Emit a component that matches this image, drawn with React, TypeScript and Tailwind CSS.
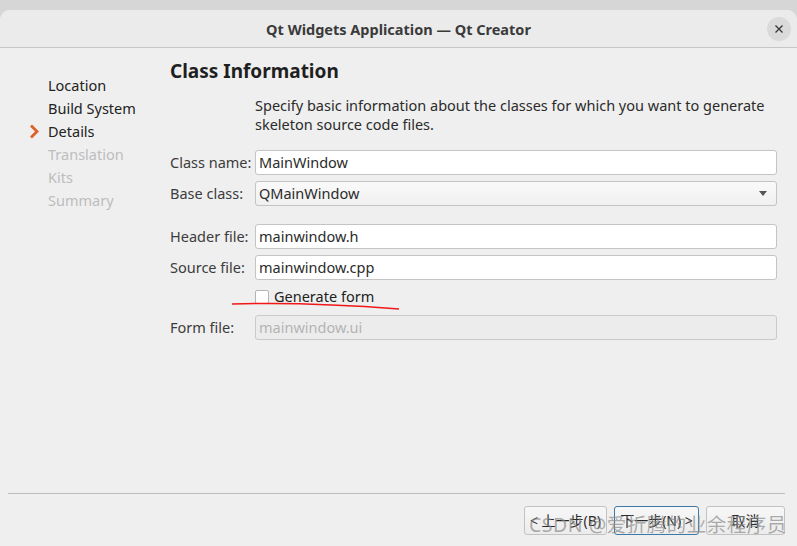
const font = { fontFamily: '"Noto Sans", "Noto Sans CJK SC", sans-serif' };

function Field({ label, value, disabled }: { label: string; value: string; disabled?: boolean }) {
  return (
    <div className="flex items-center h-[25px]">
      <div className="w-[85px] shrink-0 text-[14.5px] text-[#3c3c3c]">{label}</div>
      <div
        className={`flex-1 h-[25px] rounded-[3px] border flex items-center px-[3px] text-[14.5px] ${
          disabled ? "bg-[#ececec] border-[#c9c9c9] text-[#b4b4b4]" : "bg-white border-[#c4c4c4] text-[#2b2b2b]"
        }`}
      >
        {value}
      </div>
    </div>
  );
}

export default function App() {
  const steps = [
    { name: "Location", state: "done" },
    { name: "Build System", state: "done" },
    { name: "Details", state: "current" },
    { name: "Translation", state: "todo" },
    { name: "Kits", state: "todo" },
    { name: "Summary", state: "todo" },
  ];

  return (
    <div className="w-[797px] h-[546px] overflow-hidden bg-gradient-to-b from-[#d6d6d6] to-[#e9e9e9] pt-[10px]" style={font}>
      <div className="h-[536px] bg-[#efefef] rounded-t-[10px] flex flex-col relative overflow-hidden">
        {/* title bar */}
        <div className="h-[38px] shrink-0 bg-[#ebebeb] border-b border-[#c6c6c6] flex items-center justify-center relative">
          <span className="text-[14.5px] font-bold text-[#3a3a3a] mt-[2px]">Qt Widgets Application — Qt Creator</span>
          <div className="absolute right-[6px] top-[7px] w-[24px] h-[24px] rounded-full bg-[#dadada] flex items-center justify-center">
            <svg width="10" height="10" viewBox="0 0 10 10">
              <path d="M1.5 1.5 L8.5 8.5 M8.5 1.5 L1.5 8.5" stroke="#3a3a3a" strokeWidth="1.4" />
            </svg>
          </div>
        </div>

        <div className="flex flex-1">
          {/* nav */}
          <div className="w-[170px] shrink-0 pt-[26px]">
            {steps.map((s) => (
              <div key={s.name} className="h-[23px] flex items-center">
                <div className="w-[48px] flex justify-end pr-[8px]">
                  {s.state === "current" && (
                    <svg width="11" height="15" viewBox="0 0 11 15">
                      <path d="M2 1.5 L8 7.5 L2 13.5" fill="none" stroke="#e0602a" strokeWidth="2.8" strokeLinejoin="miter" />
                    </svg>
                  )}
                </div>
                <span className={`text-[14.5px] ${s.state === "todo" ? "text-[#bdbdbd]" : "text-[#222]"}`}>{s.name}</span>
              </div>
            ))}
          </div>

          {/* content */}
          <div className="flex-1 pr-[20px] pt-[10px]">
            <h1 className="text-[19px] font-bold text-[#1f1f1f] leading-[26px]">Class Information</h1>
            <p className="ml-[85px] mt-[12px] text-[14.5px] leading-[19px] text-[#2b2b2b]">
              Specify basic information about the classes for which you want to generate skeleton source code files.
            </p>
            <div className="mt-[16px] flex flex-col gap-[6px]">
              <Field label="Class name:" value="MainWindow" />
              <div className="flex items-center h-[25px]">
                <div className="w-[85px] shrink-0 text-[14.5px] text-[#3c3c3c]">Base class:</div>
                <div className="flex-1 h-[25px] rounded-[3px] border border-[#c4c4c4] bg-gradient-to-b from-[#fafafa] to-[#f0f0f0] flex items-center px-[3px] text-[14.5px] text-[#2b2b2b]">
                  <span className="flex-1">QMainWindow</span>
                  <svg width="8" height="5" viewBox="0 0 8 5" className="mr-[6px]">
                    <path d="M0 0 H8 L4 5 Z" fill="#555" />
                  </svg>
                </div>
              </div>
            </div>
            <div className="mt-[18px] flex flex-col gap-[6px]">
              <Field label="Header file:" value="mainwindow.h" />
              <Field label="Source file:" value="mainwindow.cpp" />
            </div>
            <div className="relative ml-[85px] mt-[7px] h-[20px] flex items-center gap-[5px]">
              <div className="w-[14px] h-[14px] bg-white border border-[#b5b5b5] rounded-[2px]" />
              <span className="text-[14.5px] text-[#222]">Generate form</span>
              <svg className="absolute left-[-23px] top-[14px]" width="170" height="10" viewBox="0 0 170 10">
                <path d="M0 3 C 50 1.5, 110 3.5, 167 8" fill="none" stroke="#f01818" strokeWidth="1.6" />
              </svg>
            </div>
            <div className="mt-[8px]">
              <Field label="Form file:" value="mainwindow.ui" disabled />
            </div>
          </div>
        </div>

        {/* footer */}
        <div className="ml-[8px] mr-[12px] border-t border-[#bdbdbd]" />
        <div className="h-[52px] shrink-0 flex items-start justify-end gap-[7px] pr-[12px] pt-[12px] relative">
          <button className="w-[83px] h-[29px] rounded-[3px] border border-[#c2c2c2] bg-gradient-to-b from-[#f7f7f7] to-[#ececec] text-[14px] text-[#2a2a2a]">
            &lt; 上一步(B)
          </button>
          <button className="w-[85px] h-[29px] rounded-[3px] border border-[#3d7aa8] bg-gradient-to-b from-[#f7f7f7] to-[#ececec] text-[14px] text-[#2a2a2a]">
            下一步(N) &gt;
          </button>
          <button className="w-[79px] h-[29px] rounded-[3px] border border-[#c2c2c2] bg-gradient-to-b from-[#f7f7f7] to-[#ececec] text-[14px] text-[#2a2a2a]">
            取消
          </button>
          <span className="absolute left-[529px] top-[16px] text-[19.5px] text-[#8a8a8a]/70 whitespace-nowrap pointer-events-none tracking-[0.5px]">
            CSDN @爱折腾的业余程序员
          </span>
        </div>
      </div>
    </div>
  );
}
